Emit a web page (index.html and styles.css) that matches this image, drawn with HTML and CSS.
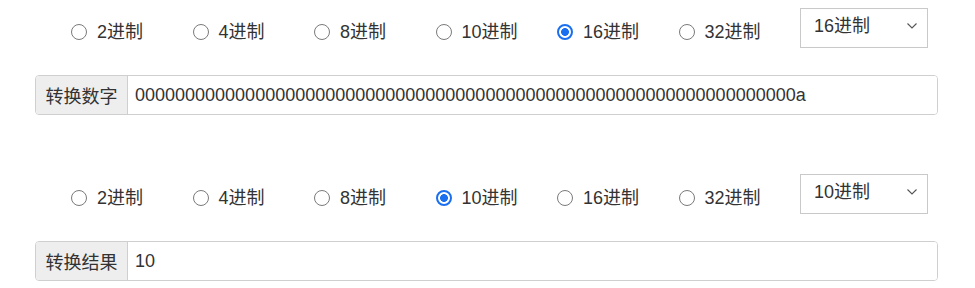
FILE: index.html
```html
<!DOCTYPE html>
<html lang="zh-CN">
  <head>
    <meta charset="UTF-8" />
    <title>进制转换</title>
    <link rel="stylesheet" href="styles.css">
  </head>
  <body>
    <div class="converter">
      <div class="section">
        <div class="base-row">
          <label class="base-option"><span class="radio"></span>2进制</label>
          <label class="base-option"><span class="radio"></span>4进制</label>
          <label class="base-option"><span class="radio"></span>8进制</label>
          <label class="base-option"><span class="radio"></span>10进制</label>
          <label class="base-option"><span class="radio checked"></span>16进制</label>
          <label class="base-option"><span class="radio"></span>32进制</label>
          <div class="select-wrap">
            <select class="base-select">
              <option>16进制</option>
            </select>
            <svg class="chevron" width="12" height="8" viewBox="0 0 12 8"><path d="M1.5 1.5 L6 6 L10.5 1.5" fill="none" stroke="#555" stroke-width="1.1"/></svg>
          </div>
        </div>
        <div class="input-group">
          <span class="addon">转换数字</span>
          <input class="field" type="text" value="000000000000000000000000000000000000000000000000000000000000000000a">
        </div>
      </div>

      <div class="section">
        <div class="base-row">
          <label class="base-option"><span class="radio"></span>2进制</label>
          <label class="base-option"><span class="radio"></span>4进制</label>
          <label class="base-option"><span class="radio"></span>8进制</label>
          <label class="base-option"><span class="radio checked"></span>10进制</label>
          <label class="base-option"><span class="radio"></span>16进制</label>
          <label class="base-option"><span class="radio"></span>32进制</label>
          <div class="select-wrap">
            <select class="base-select">
              <option>10进制</option>
            </select>
            <svg class="chevron" width="12" height="8" viewBox="0 0 12 8"><path d="M1.5 1.5 L6 6 L10.5 1.5" fill="none" stroke="#555" stroke-width="1.1"/></svg>
          </div>
        </div>
        <div class="input-group">
          <span class="addon">转换结果</span>
          <input class="field" type="text" value="10">
        </div>
      </div>
    </div>
  </body>
</html>
```

FILE: styles.css
```css
* {
  box-sizing: border-box;
}

body {
  margin: 0;
  font-family: "Liberation Sans", "Noto Sans CJK SC", sans-serif;
  font-size: 18px;
  color: #333;
  background: #fff;
}

.converter {
  padding: 8px 0 0 35px;
  width: 938px;
}

.section + .section {
  margin-top: 59px;
}

.base-row {
  display: grid;
  grid-template-columns: repeat(6, 121.5px) 128px;
  padding-left: 36px;
  height: 40px;
  align-items: start;
}

.base-option {
  display: flex;
  align-items: center;
  gap: 10px;
  height: 24px;
  margin-top: 12px;
  line-height: 24px;
  white-space: nowrap;
}

.radio {
  display: block;
  width: 16px;
  height: 16px;
  border: 1px solid #7a7a7a;
  border-radius: 50%;
  background: #fff;
  flex-shrink: 0;
}

.radio.checked {
  border: 2px solid #1a6ff0;
  background: radial-gradient(circle, #1a6ff0 0 3.6px, #fff 4.2px);
}

.select-wrap {
  position: relative;
  width: 128px;
  height: 40px;
}

.base-select {
  appearance: none;
  -webkit-appearance: none;
  width: 128px;
  height: 40px;
  margin: 0;
  padding: 0 0 4px 13px;
  border: 1px solid #c9c9c9;
  border-radius: 0;
  background: #fff;
  font-family: inherit;
  font-size: 18px;
  color: #333;
}

.chevron {
  position: absolute;
  right: 10px;
  top: 14px;
  pointer-events: none;
}

.input-group {
  display: flex;
  height: 40px;
  margin-top: 27px;
  border: 1px solid #cfcfcf;
  border-radius: 4px;
  overflow: hidden;
}

.addon {
  display: flex;
  align-items: center;
  justify-content: center;
  width: 92px;
  background: #eee;
  border-right: 1px solid #cfcfcf;
  color: #333;
  flex-shrink: 0;
}

.field {
  flex: 1;
  border: 0;
  margin: 0;
  padding: 0 7px;
  font-family: inherit;
  font-size: 18px;
  color: #333;
  outline: none;
}
```
